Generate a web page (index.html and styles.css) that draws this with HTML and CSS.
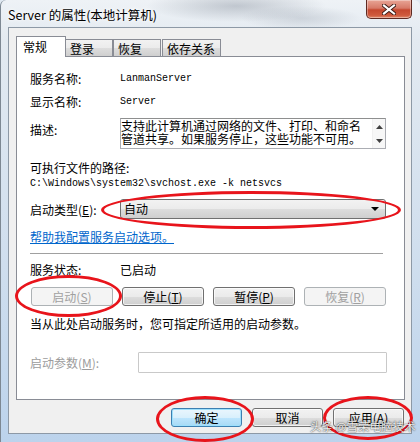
FILE: index.html
```html
<!DOCTYPE html>
<html lang="zh-CN">
<head>
<meta charset="utf-8">
<title>Server 的属性(本地计算机)</title>
<link rel="stylesheet" href="styles.css">
</head>
<body>
<div class="win">
  <div class="titlebar">
    <span class="title">Server 的属性(本地计算机)</span>
    <div class="close">
      <svg width="14" height="11" viewBox="0 0 14 11"><path d="M2 1.5 L12 9.5 M12 1.5 L2 9.5" stroke="#3a1a14" stroke-width="4" stroke-linecap="square"/><path d="M2 1.5 L12 9.5 M12 1.5 L2 9.5" stroke="#ffffff" stroke-width="2.2" stroke-linecap="square"/></svg>
    </div>
  </div>
  <div class="client">
    <div class="tabs">
      <div class="tab active">常规</div>
      <div class="tab t2">登录</div>
      <div class="tab t3">恢复</div>
      <div class="tab t4">依存关系</div>
    </div>
    <div class="panel">
      <div class="row r1"><span class="lbl">服务名称:</span><span class="mono">LanmanServer</span></div>
      <div class="row r2"><span class="lbl">显示名称:</span><span class="mono">Server</span></div>
      <div class="desc-row">
        <span class="lbl desc-lbl">描述:</span>
        <div class="desc">
          <div class="desc-text">支持此计算机通过网络的文件、打印、和命名<br>管道共享。如果服务停止，这些功能不可用。</div>
          <div class="vscroll">
            <svg width="7" height="4" viewBox="0 0 7 4"><path d="M0 4 L3.5 0 L7 4Z" fill="#404040"/></svg>
            <svg width="7" height="4" viewBox="0 0 7 4"><path d="M0 0 L3.5 4 L7 0Z" fill="#404040"/></svg>
          </div>
        </div>
      </div>
      <div class="line path-lbl">可执行文件的路径:</div>
      <div class="line mono path">C:\Windows\system32\svchost.exe -k netsvcs</div>
      <div class="row sel-row">
        <span class="lbl">启动类型(<u>E</u>):</span>
        <div class="select"><span>自动</span><svg width="8" height="4" viewBox="0 0 8 4"><path d="M0 0 L8 0 L4 4Z" fill="#000"/></svg></div>
      </div>
      <div class="line link">帮助我配置服务启动选项。</div>
      <div class="sep"></div>
      <div class="line status"><span class="lbl">服务状态:</span><span>已启动</span></div>
      <div class="btn-row">
        <div class="btn disabled">启动(<u>S</u>)</div>
        <div class="btn">停止(<u>T</u>)</div>
        <div class="btn">暂停(<u>P</u>)</div>
        <div class="btn disabled">恢复(<u>R</u>)</div>
      </div>
      <div class="line hint">当从此处启动服务时，您可指定所适用的启动参数。</div>
      <div class="param-row">
        <span class="plbl">启动参数(<u>M</u>):</span>
        <div class="pinput"></div>
      </div>
    </div>
    <div class="footer">
      <div class="fbtn default">确定</div>
      <div class="fbtn">取消</div>
      <div class="fbtn">应用(<u>A</u>)</div>
    </div>
  </div>
  <div class="ring ring-select"></div>
  <div class="ring ring-start"></div>
  <div class="ring ring-ok"></div>
  <div class="ring ring-apply"></div>
  <div class="watermark">头条 @雪荣电脑技术</div>
</div>
</body>
</html>
```

FILE: styles.css
```css
* { box-sizing: border-box; }
html, body { margin: 0; padding: 0; }
body {
  width: 420px;
  height: 442px;
  overflow: hidden;
  font-family: "Noto Sans CJK SC", "Noto Sans", sans-serif;
  font-size: 12px;
  color: #000;
  background: #dfe8f1;
}
.win {
  position: relative;
  width: 420px;
  height: 442px;
  padding: 0 8px 8px 7px;
  display: flex;
  flex-direction: column;
  border-radius: 6px 6px 0 0;
  border-left: 1px solid #7d8893;
  background:
    radial-gradient(ellipse 90px 16px at 235px 6px, rgba(110,120,135,0.35), rgba(110,120,135,0) 100%),
    radial-gradient(ellipse 60px 12px at 300px 18px, rgba(120,130,145,0.25), rgba(120,130,145,0) 100%),
    linear-gradient(180deg, #eef2f6 0, #e3eaf1 40px, #cfdeee 60%, #bcd3ec 100%);
}
.titlebar {
  height: 27px;
  display: flex;
  align-items: flex-start;
  flex: none;
}
.title {
  margin-top: 6px;
  line-height: 18px;
  font-size: 12.5px;
  color: #000;
  text-shadow: 0 0 6px #fff, 0 0 3px #fff;
}
.close {
  margin-left: auto;
  width: 46px;
  height: 19px;
  border: 1px solid #5e2a22;
  border-top: none;
  border-radius: 0 0 5px 5px;
  background: linear-gradient(180deg, #e8a596 0, #d77a68 45%, #c5482f 55%, #cf5a3d 85%, #e08a6c 100%);
  box-shadow: inset 0 0 0 1px rgba(255,255,255,0.35);
  display: flex;
  align-items: center;
  justify-content: center;
}
.client {
  flex: 1;
  background: #f0f0f0;
  border: 1px solid #8d99a6;
  padding: 8px 6px 0 7px;
  display: flex;
  flex-direction: column;
}
.tabs {
  display: flex;
  align-items: flex-end;
  height: 20px;
  position: relative;
  z-index: 2;
}
.tab {
  height: 17px;
  border: 1px solid #898c95;
  border-bottom: none;
  background: linear-gradient(180deg, #f2f2f2 0, #ebebeb 50%, #dddddd 51%, #cfcfcf 100%);
  line-height: 17px;
  padding-left: 4px;
  margin-left: -1px;
}
.tab.active {
  height: 21px;
  margin-bottom: -1px;
  width: 50px;
  margin-left: 0;
  background: #fff;
  padding-left: 6px;
  line-height: 20px;
  z-index: 3;
  position: relative;
}
.t2 { width: 48px; }
.t3 { width: 48px; margin-left: 0; }
.t4 { width: 59px; margin-left: 1px; }
.panel {
  height: 344px;
  background: #fff;
  border: 1px solid #898c95;
  width: 389px;
  padding: 0 13px;
  flex: none;
}
.row { display: flex; align-items: center; }
.lbl { width: 90px; flex: none; }
.mono {
  font-family: "Liberation Mono", "DejaVu Sans Mono", monospace;
  font-size: 10px;
}
.r1 { margin-top: 10px; height: 22px; }
.r2 { margin-top: 1px; height: 22px; }
.desc-row { display: flex; margin-top: 6px; height: 31px; }
.desc-lbl { padding-top: 4px; line-height: 16px; }
.desc {
  width: 266px;
  height: 31px;
  border: 1px solid #abadb3;
  border-top-color: #8e8f8f;
  display: flex;
}
.desc-text {
  flex: 1;
  line-height: 12.5px;
  font-size: 12px;
  padding: 1px 0 0 0;
  white-space: nowrap;
}
.vscroll {
  width: 13px;
  height: 29px;
  background: #f7f7f7;
  border-left: 1px solid #f0f0f0;
  display: flex;
  flex-direction: column;
  align-items: center;
  justify-content: space-between;
  padding: 6px 0 5px;
}
.line { height: 16px; line-height: 16px; }
.path-lbl { margin-top: 11px; }
.sel-row { margin-top: 7px; height: 20px; }
.select {
  width: 266px;
  height: 20px;
  border: 1px solid #707070;
  border-radius: 3px;
  background: linear-gradient(180deg, #f2f2f2 0, #ebebeb 50%, #dddddd 51%, #cfcfcf 100%);
  display: flex;
  align-items: center;
  justify-content: space-between;
  padding: 0 6px 0 3px;
  line-height: 16px;
}
.link {
  margin-top: 10px;
  color: #0066cc;
  text-decoration: underline;
}
.sep {
  margin-top: 8px;
  width: 353px;
  height: 2px;
  border-top: 1px solid #a0a0a0;
  border-bottom: 1px solid #fff;
}
.status { margin-top: 7px; display: flex; }
.btn-row {
  margin-top: 9px;
  margin-left: 1px;
  display: flex;
  gap: 9px;
}
.btn, .fbtn {
  height: 19px;
  border: 1px solid #707070;
  border-radius: 3px;
  background: linear-gradient(180deg, #f2f2f2 0, #ebebeb 50%, #dddddd 51%, #cfcfcf 100%);
  box-shadow: inset 0 0 0 1px rgba(255,255,255,0.7);
  display: flex;
  align-items: center;
  justify-content: center;
  line-height: 16px;
}
.btn { width: 82px; }
.btn.disabled {
  border-color: #adb2b5;
  background: #f4f4f4;
  color: #a0a0a0;
  box-shadow: none;
}
.hint { margin-top: 10px; }
.param-row {
  margin-top: 20px;
  display: flex;
  align-items: center;
  height: 21px;
}
.plbl { width: 108px; color: #9c9c9c; }
.pinput {
  width: 249px;
  height: 21px;
  border: 1px solid #c9c9c9;
  border-radius: 1px;
  background: #fff;
}
.footer {
  margin-top: 8px;
  display: flex;
  justify-content: flex-end;
  gap: 10px;
  padding-right: 1px;
}
.fbtn { width: 71px; }
.fbtn.default {
  border-color: #3c7fb1;
  background: linear-gradient(180deg, #eaf6fd 0, #d9f0fc 50%, #bee6fd 51%, #a7d9f5 100%);
  box-shadow: inset 0 0 0 1px #9de0fc;
}
.ring {
  position: absolute;
  border: 3px solid #e8141b;
  border-radius: 50%;
  z-index: 5;
}
.ring-select { left: 100px; top: 191px; width: 300px; height: 38px; }
.ring-start { left: 14px; top: 275px; width: 107px; height: 42px; }
.ring-ok { left: 155px; top: 396px; width: 98px; height: 46px; }
.ring-apply { left: 322px; top: 396px; width: 90px; height: 44px; }
.watermark {
  position: absolute;
  left: 309px;
  top: 419px;
  font-size: 11.5px;
  line-height: 14px;
  color: rgba(255,255,255,0.92);
  text-shadow: 0 0 2px rgba(0,0,0,0.6), 0 0 1px rgba(0,0,0,0.6);
  z-index: 6;
  white-space: nowrap;
}
```
